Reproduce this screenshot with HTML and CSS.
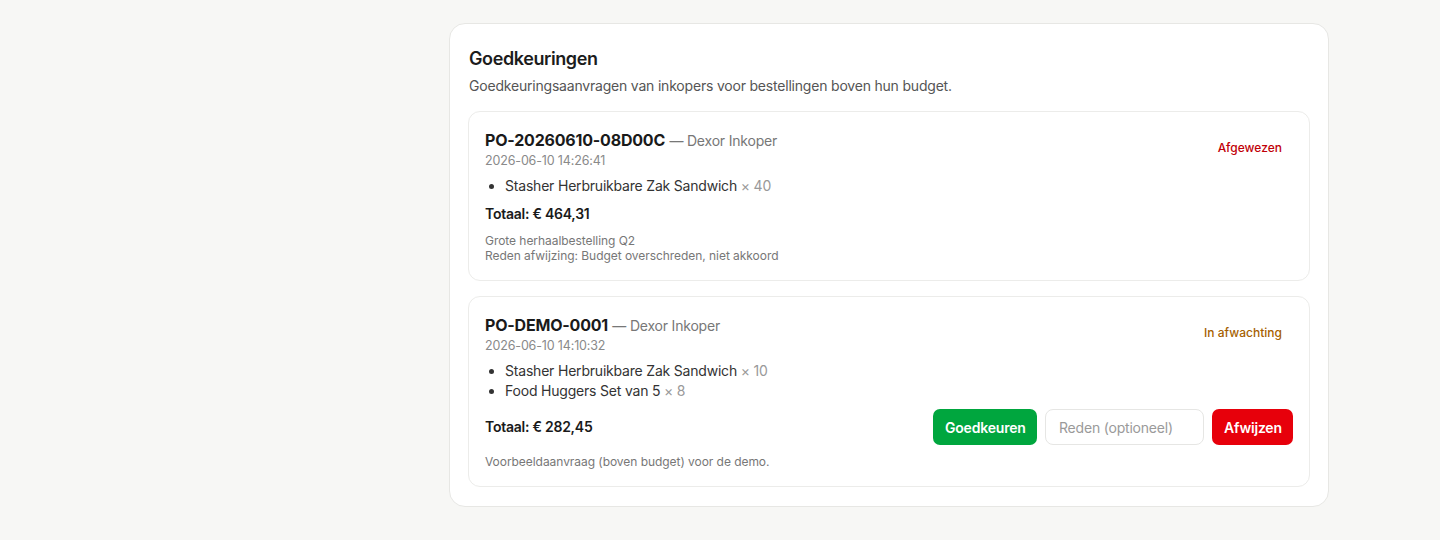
FILE: index.html
```html
<!DOCTYPE html>
<html lang="nl">
<head>
<meta charset="utf-8">
<title>Goedkeuringen</title>
<link rel="stylesheet" href="styles.css">
</head>
<body>
<div class="layout">
  <aside class="sidebar"></aside>
  <main class="main">
    <section class="panel">
      <h1 class="panel-title">Goedkeuringen</h1>
      <p class="panel-sub">Goedkeuringsaanvragen van inkopers voor bestellingen boven hun budget.</p>

      <div class="list">
        <article class="req">
          <div class="req-head">
            <div>
              <div class="req-title"><span class="po">PO-20260610-08D00C</span> <span class="buyer">— Dexor Inkoper</span></div>
              <div class="req-date">2026-06-10 14:26:41</div>
            </div>
            <span class="badge badge-rejected">Afgewezen</span>
          </div>
          <ul class="items">
            <li>Stasher Herbruikbare Zak Sandwich <span class="qty">× 40</span></li>
          </ul>
          <div class="total">Totaal: € 464,31</div>
          <div class="notes">
            <div>Grote herhaalbestelling Q2</div>
            <div>Reden afwijzing: Budget overschreden, niet akkoord</div>
          </div>
        </article>

        <article class="req">
          <div class="req-head">
            <div>
              <div class="req-title"><span class="po">PO-DEMO-0001</span> <span class="buyer">— Dexor Inkoper</span></div>
              <div class="req-date">2026-06-10 14:10:32</div>
            </div>
            <span class="badge badge-pending">In afwachting</span>
          </div>
          <ul class="items">
            <li>Stasher Herbruikbare Zak Sandwich <span class="qty">× 10</span></li>
            <li>Food Huggers Set van 5 <span class="qty">× 8</span></li>
          </ul>
          <div class="total-row">
            <div class="total">Totaal: € 282,45</div>
            <div class="actions">
              <button class="btn btn-approve" type="button">Goedkeuren</button>
              <input class="reason" type="text" placeholder="Reden (optioneel)">
              <button class="btn btn-reject" type="button">Afwijzen</button>
            </div>
          </div>
          <div class="notes">
            <div>Voorbeeldaanvraag (boven budget) voor de demo.</div>
          </div>
        </article>
      </div>
    </section>
  </main>
</div>
</body>
</html>
```

FILE: styles.css
```css
* { box-sizing: border-box; }

html, body {
  margin: 0;
  padding: 0;
  background: #f7f7f5;
  font-family: Inter, "Noto Sans", "Liberation Sans", sans-serif;
  color: #1a1a1a;
  letter-spacing: -0.2px;
}

.layout {
  display: flex;
  min-height: 540px;
}

.sidebar {
  width: 338px;
  flex: none;
}

.main {
  flex: 1;
  display: flex;
  justify-content: center;
  padding-top: 23px;
}

.panel {
  width: 880px;
  align-self: flex-start;
  background: #ffffff;
  border: 1px solid #e7e7e4;
  border-radius: 16px;
  padding: 21px 18px 19px 18px;
}

.panel-title {
  margin: 0;
  padding-left: 1px;
  font-size: 18px;
  line-height: 28px;
  font-weight: 600;
  color: #1c1c1c;
  letter-spacing: -0.4px;
}

.panel-sub {
  margin: 3px 0 0;
  padding-left: 1px;
  font-size: 14px;
  line-height: 20px;
  color: #555555;
}

.list {
  margin-top: 15px;
  display: flex;
  flex-direction: column;
  gap: 15px;
}

.req {
  border: 1px solid #ececea;
  border-radius: 12px;
  padding: 16px 16px 17px 16px;
}

.req-head {
  display: flex;
  justify-content: space-between;
  align-items: center;
}

.req-title {
  font-size: 16px;
  line-height: 24px;
}

.po {
  font-weight: 700;
  color: #1a1a1a;
}

.buyer {
  font-size: 14px;
  color: #777777;
}

.req-date {
  font-size: 12.5px;
  line-height: 15px;
  color: #8a8a8a;
  letter-spacing: -0.15px;
}

.badge {
  font-size: 12px;
  font-weight: 500;
  line-height: 16px;
  padding: 4px 11px;
  border-radius: 999px;
  letter-spacing: 0;
}

.badge-rejected { color: #c10007; }
.badge-pending { color: #a65f00; }

.items {
  margin: 8px 0 0;
  padding-left: 20px;
  font-size: 14px;
  line-height: 20px;
  color: #333333;
}

.qty { color: #999999; }

.total {
  margin-top: 8px;
  font-size: 14px;
  line-height: 20px;
  font-weight: 600;
  color: #1a1a1a;
  letter-spacing: -0.25px;
}

.total-row {
  margin-top: 8px;
  display: flex;
  align-items: center;
  justify-content: space-between;
}

.total-row .total { margin-top: 0; }

.actions {
  display: flex;
  align-items: center;
  gap: 8px;
}

.btn {
  height: 36px;
  border: none;
  border-radius: 7px;
  padding: 0 12px;
  font-family: inherit;
  font-size: 14px;
  font-weight: 600;
  letter-spacing: -0.2px;
  color: #ffffff;
  cursor: pointer;
}

.btn-approve { background: #00a63e; width: 104px; }
.btn-reject { background: #e7000b; width: 81px; }

.reason {
  width: 159px;
  height: 36px;
  border: 1px solid #e6e6e4;
  border-radius: 8px;
  padding: 0 13px;
  font-family: inherit;
  font-size: 14px;
  letter-spacing: -0.2px;
  color: #333333;
  background: #ffffff;
  outline: none;
}

.reason::placeholder { color: #9a9a9a; }

.notes {
  margin-top: 9px;
  font-size: 12px;
  line-height: 15px;
  color: #777777;
  letter-spacing: -0.05px;
}
```
